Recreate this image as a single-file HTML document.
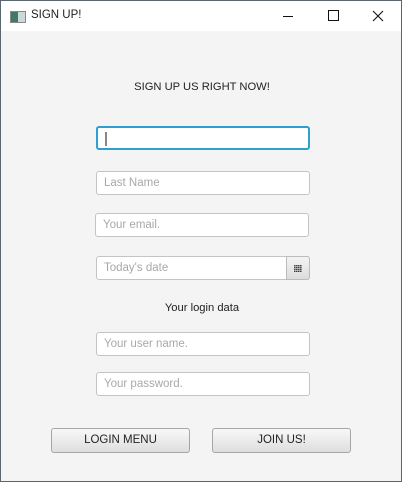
<!DOCTYPE html>
<html><head><style>
body{margin:0;width:402px;height:482px;overflow:hidden;font-family:"Liberation Sans",sans-serif;}
.win{position:absolute;left:0;top:0;width:400px;height:480px;border:1px solid #5a6670;background:#f4f4f4;}
.tb{position:absolute;left:0;top:0;width:400px;height:30px;background:#fff;}
.t{position:absolute;font-size:11.2px;color:#222;}
.f{position:absolute;box-sizing:border-box;height:24px;width:214px;background:#fff;border:1px solid #c4c4c4;border-radius:3px;font-size:11.5px;color:#a8a8a8;padding:5px 0 0 7px;}
.b{position:absolute;box-sizing:border-box;height:25px;width:139px;border:1px solid #a6a6a6;border-radius:3px;background:linear-gradient(#f8f8f8,#dedede);font-size:11.5px;color:#222;text-align:center;line-height:23px;}
</style></head><body>
<div class="win">
<div class="tb">
<div style="position:absolute;left:9px;top:10px;width:14px;height:10px;border:1px solid #888;background:linear-gradient(90deg,#3d7a6a 50%,#cfd8d8 50%)"></div>
<div class="t" style="left:30px;top:8px;font-size:11.5px">SIGN UP!</div>
<div style="position:absolute;left:282px;top:15px;width:10px;height:1px;background:#111"></div>
<div style="position:absolute;left:327px;top:9px;width:9px;height:9px;border:1px solid #111"></div>
<svg style="position:absolute;left:371px;top:9px" width="12" height="12"><path d="M1 1L11 11M11 1L1 11" stroke="#111" stroke-width="1.1"/></svg>
</div>
<div class="t" style="left:0;width:402px;text-align:center;top:80px">SIGN UP US RIGHT NOW!</div>
<div class="f" style="left:95px;top:125px;border:2px solid #2e9fd0;"><div style="position:absolute;left:7px;top:4px;width:2px;height:14px;background:#888"></div></div>
<div class="f" style="left:95px;top:170px">Last Name</div>
<div class="f" style="left:94px;top:212px">Your email.</div>
<div class="f" style="left:95px;top:255px">Today's date</div>
<div style="position:absolute;left:285px;top:255px;width:24px;height:24px;box-sizing:border-box;border:1px solid #bbb;border-radius:0 3px 3px 0;background:linear-gradient(#f4f4f4,#dcdcdc)"><div style="position:absolute;left:7px;top:8px;width:8px;height:7px;background:repeating-linear-gradient(90deg,#444 0 1px,transparent 1px 2px),#888"></div><div style="position:absolute;left:7px;top:8px;width:8px;height:7px;background:repeating-linear-gradient(0deg,transparent 0 1px,#ddd 1px 2px);opacity:.6"></div></div>
<div class="t" style="left:0;width:402px;text-align:center;top:301px">Your login data</div>
<div class="f" style="left:95px;top:331px">Your user name.</div>
<div class="f" style="left:95px;top:371px">Your password.</div>
<div class="b" style="left:50px;top:427px">LOGIN MENU</div>
<div class="b" style="left:211px;top:427px">JOIN US!</div>
</div>
</body></html>
